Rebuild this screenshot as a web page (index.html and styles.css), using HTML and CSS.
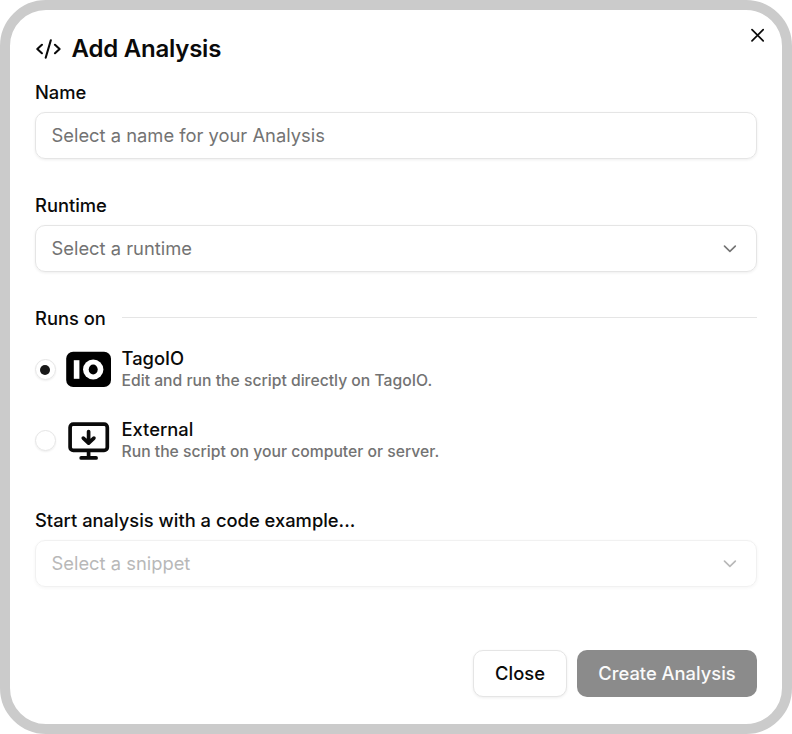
FILE: index.html
```html
<!DOCTYPE html>
<html lang="en">
<head>
<meta charset="utf-8">
<title>Add Analysis</title>
<link rel="stylesheet" href="styles.css">
</head>
<body>
<main class="dialog">
  <header class="header">
    <svg class="code-icon" viewBox="0 0 26 26" fill="none" stroke="currentColor" stroke-width="2.1" stroke-linecap="round" stroke-linejoin="round"><path d="M6.9 8.8 2.3 13l4.6 4.2M20 8.8l4.6 4.2-4.6 4.2M15.8 4.2l-5.1 17.5"/></svg>
    <h1 class="title">Add Analysis</h1>
    <button class="dismiss" aria-label="Close dialog"><svg viewBox="0 0 14 14" fill="none" stroke="currentColor" stroke-width="1.7" stroke-linecap="round"><path d="m2 1.7 11.2 11.2M13.2 1.7 2 12.9"/></svg></button>
  </header>
  <section class="field">
    <div class="label">Name</div>
    <div class="control"><span class="hint">Select a name for your Analysis</span></div>
  </section>
  <section class="field">
    <div class="label">Runtime</div>
    <div class="control"><span class="hint">Select a runtime</span><svg class="chevron" viewBox="0 0 14 8" fill="none" stroke="currentColor" stroke-width="1.6" stroke-linecap="round" stroke-linejoin="round"><path d="m1.5 1.1 5.4 5.2 5.4-5.2"/></svg></div>
  </section>
  <section class="runs">
    <div class="runs-head"><div class="label">Runs on</div><div class="rule"></div></div>
    <div class="option">
      <span class="radio checked"></span>
      <svg class="option-icon" viewBox="0 0 46 40"><rect x="0.2" y="1.8" width="44.8" height="35.2" rx="7" fill="#000"/><rect x="7.8" y="10.2" width="5.6" height="18.6" fill="#fff"/><ellipse cx="27.2" cy="19.5" rx="10.2" ry="10" fill="#fff"/><ellipse cx="27.2" cy="19.5" rx="4.5" ry="5.1" fill="#000"/></svg>
      <div class="option-text"><div class="option-name">TagoIO</div><div class="option-note">Edit and run the script directly on TagoIO.</div></div>
    </div>
    <div class="option">
      <span class="radio"></span>
      <svg class="option-icon" viewBox="0 0 46 40" fill="none" stroke="#0a0a0a" stroke-width="3.7" stroke-linecap="round" stroke-linejoin="round"><rect x="4.1" y="3.2" width="37.2" height="26.2" rx="3.2"/><path d="M22.6 30v7M15.2 36.9h14.9M22.6 10.6v11M17.3 17.1l5.3 5 5.3-5"/></svg>
      <div class="option-text"><div class="option-name">External</div><div class="option-note">Run the script on your computer or server.</div></div>
    </div>
  </section>
  <section class="field">
    <div class="label">Start analysis with a code example...</div>
    <div class="control disabled"><span class="hint">Select a snippet</span><svg class="chevron" viewBox="0 0 14 8" fill="none" stroke="currentColor" stroke-width="1.6" stroke-linecap="round" stroke-linejoin="round"><path d="m1.5 1.1 5.4 5.2 5.4-5.2"/></svg></div>
  </section>
  <footer class="actions">
    <button class="button close">Close</button>
    <button class="button create">Create Analysis</button>
  </footer>
</main>
</body>
</html>
```
FILE: styles.css
```css
* { box-sizing: border-box; }
body { margin: 0; background: #fff; font-family: Inter, "Liberation Sans", sans-serif; color: #0a0a0a; }
.dialog { width: 792px; height: 734px; padding: 25px 25px 0; border: 10px solid #cbcbcb; border-radius: 46px; background: #fff; }
.header { display: flex; align-items: center; height: 28px; margin-bottom: 11px; }
.code-icon { width: 26px; height: 26px; }
.title { margin: 0 0 0 10.5px; font-size: 24px; line-height: 28px; font-weight: 600; letter-spacing: -.22px; white-space: nowrap; }
.dismiss { width: 14px; height: 14px; margin: -28px -7px 0 auto; padding: 0; border: 0; background: none; color: #0a0a0a; }
.dismiss svg { display: block; width: 14px; height: 14px; }
.field { height: 113px; }
.label { height: 38px; font-size: 18.35px; line-height: 37px; font-weight: 500; white-space: nowrap; }
.control { display: flex; align-items: center; justify-content: space-between; height: 47px; padding: 0 19px 0 15.5px; border: 1px solid #e5e5e5; border-radius: 10px; box-shadow: 0 1px 3px rgb(0 0 0 / 7%); font-size: 18.35px; color: #737373; }
.hint { line-height: 22px; padding-bottom: 1px; }
.chevron { width: 14px; height: 8px; }
.disabled { opacity: .5; }
.runs { height: 202px; }
.runs-head { display: flex; align-items: center; height: 35px; margin-bottom: 14px; gap: 16px; }
.runs-head .label { height: 35px; }
.rule { flex: 1; height: 1px; background: #e5e5e5; }
.option { display: flex; height: 42px; margin-bottom: 29px; }
.radio { display: flex; align-items: center; justify-content: center; width: 21px; height: 21px; margin-top: 10px; border: 1px solid #e5e5e5; border-radius: 50%; box-shadow: 0 1px 2px rgb(0 0 0 / 7%); }
.checked::after { content: ""; width: 10px; height: 10px; margin-right: 1px; border-radius: 50%; background: #171717; }
.option-icon { width: 46px; height: 40px; margin: 1px 9.5px 0 10px; }
.option-text { margin-top: -2px; }
.option-name { font-size: 18.35px; line-height: 22px; margin-bottom: 1px; font-weight: 500; }
.option-note { font-size: 15.73px; line-height: 22px; font-weight: 500; color: #737373; white-space: nowrap; }
.actions { display: flex; justify-content: flex-end; gap: 10px; margin-top: 35px; }
.button { height: 47px; padding: 0 0 2px; border-radius: 10px; font: 500 18.35px Inter, "Liberation Sans", sans-serif; }
.close { width: 94px; border: 1px solid #e5e5e5; background: #fff; color: #0a0a0a; box-shadow: 0 1px 3px rgb(0 0 0 / 7%); }
.create { width: 180px; border: 0; background: #8b8b8b; color: #fafafa; }
```
